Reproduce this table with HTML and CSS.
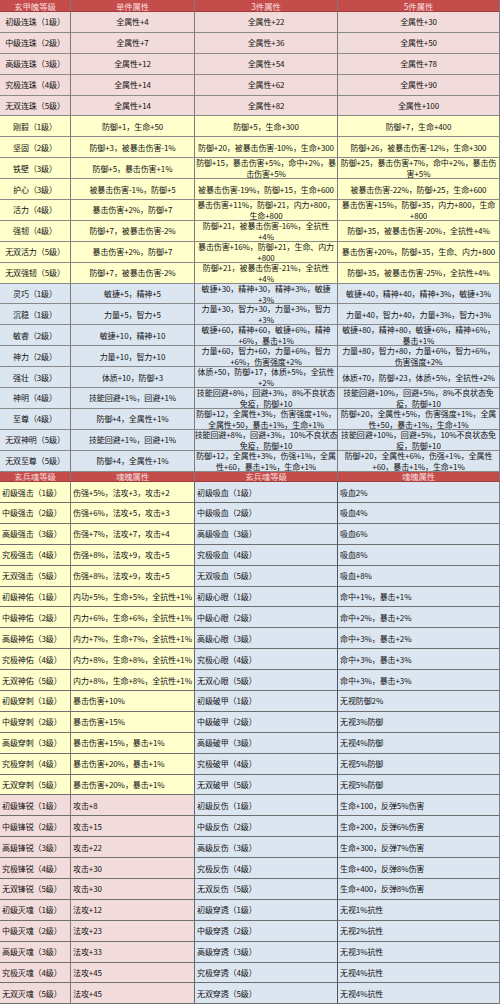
FILE: index.html
```html
<!DOCTYPE html>
<html lang="zh-CN">
<head>
<meta charset="utf-8">
<title>玄甲魄 / 玄兵魂 属性表</title>
<link rel="stylesheet" href="styles.css">
</head>
<body>
<div class="sheet">
  <div class="grid upper">
    <div class="row head"><div>玄甲魄等级</div><div>单件属性</div><div>3件属性</div><div>5件属性</div></div>

    <div class="row pink"><div>初级连珠（1级）</div><div>全属性+4</div><div>全属性+22</div><div>全属性+30</div></div>
    <div class="row pink"><div>中级连珠（2级）</div><div>全属性+7</div><div>全属性+36</div><div>全属性+50</div></div>
    <div class="row pink"><div>高级连珠（3级）</div><div>全属性+12</div><div>全属性+54</div><div>全属性+78</div></div>
    <div class="row pink"><div>究极连珠（4级）</div><div>全属性+14</div><div>全属性+62</div><div>全属性+90</div></div>
    <div class="row pink"><div>无双连珠（5级）</div><div>全属性+14</div><div>全属性+82</div><div>全属性+100</div></div>

    <div class="row yellow"><div>刚毅（1级）</div><div>防御+1，生命+50</div><div>防御+5，生命+300</div><div>防御+7，生命+400</div></div>
    <div class="row yellow"><div>坚固（2级）</div><div>防御+3，被暴击伤害-1%</div><div>防御+20，被暴击伤害-10%，生命+300</div><div>防御+26，被暴击伤害-12%，生命+300</div></div>
    <div class="row yellow"><div>铁壁（3级）</div><div>防御+5，暴击伤害+1%</div><div>防御+15，暴击伤害+5%，命中+2%，暴<br>击伤害+5%</div><div>防御+25，暴击伤害+7%，命中+2%，暴击伤<br>害+5%</div></div>
    <div class="row yellow"><div>护心（3级）</div><div>被暴击伤害-1%，防御+5</div><div>被暴击伤害-19%，防御+15，生命+600</div><div>被暴击伤害-22%，防御+25，生命+600</div></div>
    <div class="row yellow"><div>活力（4级）</div><div>暴击伤害+2%，防御+7</div><div>暴击伤害+11%，防御+21，内力+800，<br>生命+800</div><div>暴击伤害+15%，防御+35，内力+800，生命<br>+800</div></div>
    <div class="row yellow"><div>强韧（4级）</div><div>防御+7，被暴击伤害-2%</div><div>防御+21，被暴击伤害-16%，全抗性<br>+4%</div><div>防御+35，被暴击伤害-20%，全抗性+4%</div></div>
    <div class="row yellow"><div>无双活力（5级）</div><div>暴击伤害+2%，防御+7</div><div>暴击伤害+16%，防御+21，生命、内力<br>+800</div><div>暴击伤害+20%，防御+35，生命、内力+800</div></div>
    <div class="row yellow"><div>无双强韧（5级）</div><div>防御+7，被暴击伤害-2%</div><div>防御+21，被暴击伤害-21%，全抗性<br>+4%</div><div>防御+35，被暴击伤害-25%，全抗性+4%</div></div>

    <div class="row blue"><div>灵巧（1级）</div><div>敏捷+5，精神+5</div><div>敏捷+30，精神+30，精神+3%，敏捷<br>+3%</div><div>敏捷+40，精神+40，精神+3%，敏捷+3%</div></div>
    <div class="row blue"><div>沉稳（1级）</div><div>力量+5，智力+5</div><div>力量+30，智力+30，力量+3%，智力<br>+3%</div><div>力量+40，智力+40，力量+3%，智力+3%</div></div>
    <div class="row blue"><div>敏睿（2级）</div><div>敏捷+10，精神+10</div><div>敏捷+60，精神+60，敏捷+6%，精神<br>+6%，暴击+1%</div><div>敏捷+80，精神+80，敏捷+6%，精神+6%，<br>暴击+1%</div></div>
    <div class="row blue"><div>神力（2级）</div><div>力量+10，智力+10</div><div>力量+60，智力+60，力量+6%，智力<br>+6%，伤害强度+2%</div><div>力量+80，智力+80，力量+6%，智力+6%，<br>伤害强度+2%</div></div>
    <div class="row blue"><div>强壮（3级）</div><div>体质+10，防御+3</div><div>体质+50，防御+17，体质+5%，全抗性<br>+2%</div><div>体质+70，防御+23，体质+5%，全抗性+2%</div></div>
    <div class="row blue"><div>神明（4级）</div><div>技能回避+1%，回避+1%</div><div>技能回避+8%，回避+3%，8%不良状态<br>免疫，防御+10</div><div>技能回避+10%，回避+5%，8%不良状态免<br>疫，防御+10</div></div>
    <div class="row blue"><div>至尊（4级）</div><div>防御+4，全属性+1%</div><div>防御+12，全属性+3%，伤害强度+1%，<br>全属性+50，暴击+1%，生命+1%</div><div>防御+20，全属性+5%，伤害强度+1%，全属<br>性+50，暴击+1%，生命+1%</div></div>
    <div class="row blue"><div>无双神明（5级）</div><div>技能回避+1%，回避+1%</div><div>技能回避+8%，回避+3%，10%不良状态<br>免疫，防御+10</div><div>技能回避+10%，回避+5%，10%不良状态免<br>疫，防御+10</div></div>
    <div class="row blue"><div>无双至尊（5级）</div><div>防御+4，全属性+1%</div><div>防御+12，全属性+3%，伤强+1%，全属<br>性+60，暴击+1%，生命+1%</div><div>防御+20，全属性+6%，伤强+1%，全属性<br>+60，暴击+1%，生命+1%</div></div>
  </div>

  <div class="grid lower">
    <div class="row head"><div>玄兵魂等级</div><div>魂魄属性</div><div>玄兵魂等级</div><div>魂魄属性</div></div>

    <div class="row yellow"><div>初级强击（1级）</div><div>伤强+5%，法攻+3，攻击+2</div><div>初级吸血（1级）</div><div>吸血2%</div></div>
    <div class="row yellow"><div>中级强击（2级）</div><div>伤强+6%，法攻+5，攻击+3</div><div>中级吸血（2级）</div><div>吸血4%</div></div>
    <div class="row yellow"><div>高级强击（3级）</div><div>伤强+7%，法攻+7，攻击+4</div><div>高级吸血（3级）</div><div>吸血6%</div></div>
    <div class="row yellow"><div>究极强击（4级）</div><div>伤强+8%，法攻+9，攻击+5</div><div>究极吸血（4级）</div><div>吸血8%</div></div>
    <div class="row yellow"><div>无双强击（5级）</div><div>伤强+8%，法攻+9，攻击+5</div><div>无双吸血（5级）</div><div>吸血+8%</div></div>
    <div class="row yellow"><div>初级神佑（1级）</div><div>内功+5%，生命+5%，全抗性+1%</div><div>初级心眼（1级）</div><div>命中+1%，暴击+1%</div></div>
    <div class="row yellow"><div>中级神佑（2级）</div><div>内力+6%，生命+6%，全抗性+1%</div><div>中级心眼（2级）</div><div>命中+2%，暴击+2%</div></div>
    <div class="row yellow"><div>高级神佑（3级）</div><div>内力+7%，生命+7%，全抗性+1%</div><div>高级心眼（3级）</div><div>命中+3%，暴击+2%</div></div>
    <div class="row yellow"><div>究极神佑（4级）</div><div>内力+8%，生命+8%，全抗性+1%</div><div>究极心眼（4级）</div><div>命中+3%，暴击+3%</div></div>
    <div class="row yellow"><div>无双神佑（5级）</div><div>内力+8%，生命+8%，全抗性+1%</div><div>无双心眼（5级）</div><div>命中+3%，暴击+3%</div></div>
    <div class="row yellow"><div>初级穿刺（1级）</div><div>暴击伤害+10%</div><div>初级破甲（1级）</div><div>无视防御2%</div></div>
    <div class="row yellow"><div>中级穿刺（2级）</div><div>暴击伤害+15%</div><div>中级破甲（2级）</div><div>无视3%防御</div></div>
    <div class="row yellow"><div>高级穿刺（3级）</div><div>暴击伤害+15%，暴击+1%</div><div>高级破甲（3级）</div><div>无视4%防御</div></div>
    <div class="row yellow"><div>究极穿刺（4级）</div><div>暴击伤害+20%，暴击+1%</div><div>究极破甲（4级）</div><div>无视5%防御</div></div>
    <div class="row yellow"><div>无双穿刺（5级）</div><div>暴击伤害+20%，暴击+1%</div><div>无双破甲（5级）</div><div>无视5%防御</div></div>

    <div class="row pink"><div>初级锋锐（1级）</div><div>攻击+8</div><div>初级反伤（1级）</div><div>生命+100，反弹5%伤害</div></div>
    <div class="row pink"><div>中级锋锐（2级）</div><div>攻击+15</div><div>中级反伤（2级）</div><div>生命+200，反弹6%伤害</div></div>
    <div class="row pink"><div>高级锋锐（3级）</div><div>攻击+22</div><div>高级反伤（3级）</div><div>生命+300，反弹7%伤害</div></div>
    <div class="row pink"><div>究极锋锐（4级）</div><div>攻击+30</div><div>究极反伤（4级）</div><div>生命+400，反弹8%伤害</div></div>
    <div class="row pink"><div>无双锋锐（5级）</div><div>攻击+30</div><div>无双反伤（5级）</div><div>生命+400，反弹8%伤害</div></div>
    <div class="row pink"><div>初级灭魂（1级）</div><div>法攻+12</div><div>初级穿透（1级）</div><div>无视1%抗性</div></div>
    <div class="row pink"><div>中级灭魂（2级）</div><div>法攻+23</div><div>中级穿透（2级）</div><div>无视2%抗性</div></div>
    <div class="row pink"><div>高级灭魂（3级）</div><div>法攻+33</div><div>高级穿透（3级）</div><div>无视3%抗性</div></div>
    <div class="row pink"><div>究极灭魂（4级）</div><div>法攻+45</div><div>究极穿透（4级）</div><div>无视4%抗性</div></div>
    <div class="row pink"><div>无双灭魂（5级）</div><div>法攻+45</div><div>无双穿透（5级）</div><div>无视4%抗性</div></div>
  </div>
</div>
</body>
</html>
```
FILE: styles.css
```css
html, body {
  margin: 0;
  padding: 0;
  background: #ffffff;
}

.sheet {
  width: 500px;
  font-family: "Noto Sans CJK SC", "Noto Sans", sans-serif;
  font-size: 8px;
  color: #111111;
}

.grid {
  display: grid;
  grid-template-columns: 71px 124px 143px 162px;
}

.upper {
  grid-template-rows: 12px;
  grid-auto-rows: 20.9px;
}

.lower {
  grid-template-rows: 10.5px;
  grid-auto-rows: 20.9px;
}

.row {
  display: contents;
}

.row > div {
  box-sizing: border-box;
  border-right: 1px solid #7c7c7c;
  border-bottom: 1px solid #8a8a8a;
  display: flex;
  align-items: center;
  justify-content: center;
  text-align: center;
  white-space: nowrap;
  line-height: 11px;
  overflow: visible;
  letter-spacing: -0.1px;
}

.head > div {
  background: #c44d4c;
  color: #f9dcdc;
  font-size: 8.4px;
  line-height: 10px;
  border-bottom-color: #a33b3b;
}

.pink > div {
  background: #f2dcdb;
}

.yellow > div {
  background: #ffffcc;
}

.blue > div {
  background: #dce6f1;
}

.lower .row:not(.head) > div {
  justify-content: flex-start;
  text-align: left;
  padding-left: 2px;
  border-bottom-color: #6f6f6f;
}

.lower .row:not(.head) > div:nth-child(n+3) {
  background: #dce6f1;
}

.lower .row:not(.head) > div:nth-child(2) {
  border-right-color: #5e6878;
}

.lower .row:not(.head) > div:nth-child(3) {
  border-right-color: #4a5568;
}
```
